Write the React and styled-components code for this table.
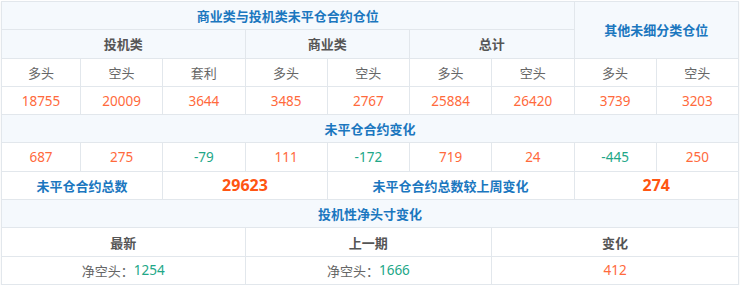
import styled, { createGlobalStyle } from 'styled-components'

const GlobalStyle = createGlobalStyle`
  html, body {
    margin: 0;
    padding: 0;
    background: #fff;
  }
  body {
    font-family: "Noto Sans", "Noto Sans CJK SC", sans-serif;
  }
`;

const Page = styled.div`
  padding: 1px 0 0 1px;
`;

const Sheet = styled.div`
  width: 738px;
  height: 284px;
  box-sizing: border-box;
  display: grid;
  grid-template-columns: 78px repeat(8, 1fr);
  grid-template-rows: repeat(10, 1fr);
  gap: 1px;
  padding: 1px;
  background: #e2e7ec;
  box-shadow: 0 1px 2px rgba(0, 0, 0, 0.06);
`;

const Cell = styled.div`
  grid-column: span ${p => p.$span || 1};
  grid-row: span ${p => p.$rows || 1};
  display: flex;
  align-items: center;
  justify-content: center;
  background: #fff;
  font-size: 13px;
  color: #666;
  white-space: nowrap;
`;

const HeadCell = styled(Cell)`
  background: #f5f9fd;
  color: #1b77bf;
  font-weight: bold;
`;

const TitleCell = styled(Cell)`
  color: #1b77bf;
  font-weight: bold;
`;

const SubHead = styled(Cell)`
  background: #f5f9fd;
  color: #555;
  font-weight: bold;
`;

const ColHead = styled(Cell)`
  color: #555;
  font-weight: bold;
`;

const Num = styled(Cell)`
  color: ${p => (p.$down ? '#22a788' : '#ff6a3c')};
  font-size: 13.5px;
`;

const BigNum = styled(Cell)`
  color: #ff5512;
  font-size: 16px;
  font-weight: bold;
`;

const Value = styled.span`
  color: ${p => (p.$down ? '#22a788' : '#ff6a3c')};
  font-size: 13.5px;
`;

const positions = [18755, 20009, 3644, 3485, 2767, 25884, 26420, 3739, 3203];
const changes = [687, 275, -79, 111, -172, 719, 24, -445, 250];
const sides = ['多头', '空头', '套利', '多头', '空头', '多头', '空头', '多头', '空头'];

export default function App() {
  return (
    <Page>
      <GlobalStyle />
      <Sheet>
        <HeadCell $span={7}>商业类与投机类未平仓合约仓位</HeadCell>
        <HeadCell $span={2} $rows={2}>其他未细分类仓位</HeadCell>
        <SubHead $span={3}>投机类</SubHead>
        <SubHead $span={2}>商业类</SubHead>
        <SubHead $span={2}>总计</SubHead>

        {sides.map((s, i) => (
          <Cell key={'s' + i}>{s}</Cell>
        ))}
        {positions.map((n, i) => (
          <Num key={'p' + i}>{n}</Num>
        ))}

        <HeadCell $span={9}>未平仓合约变化</HeadCell>
        {changes.map((n, i) => (
          <Num key={'c' + i} $down={n < 0}>{n}</Num>
        ))}

        <TitleCell $span={2}>未平仓合约总数</TitleCell>
        <BigNum $span={2}>29623</BigNum>
        <TitleCell $span={3}>未平仓合约总数较上周变化</TitleCell>
        <BigNum $span={2}>274</BigNum>

        <HeadCell $span={9}>投机性净头寸变化</HeadCell>
        <ColHead $span={3}>最新</ColHead>
        <ColHead $span={3}>上一期</ColHead>
        <ColHead $span={3}>变化</ColHead>
        <Cell $span={3}>净空头：<Value $down>1254</Value></Cell>
        <Cell $span={3}>净空头：<Value $down>1666</Value></Cell>
        <Cell $span={3}><Value>412</Value></Cell>
      </Sheet>
    </Page>
  );
}
